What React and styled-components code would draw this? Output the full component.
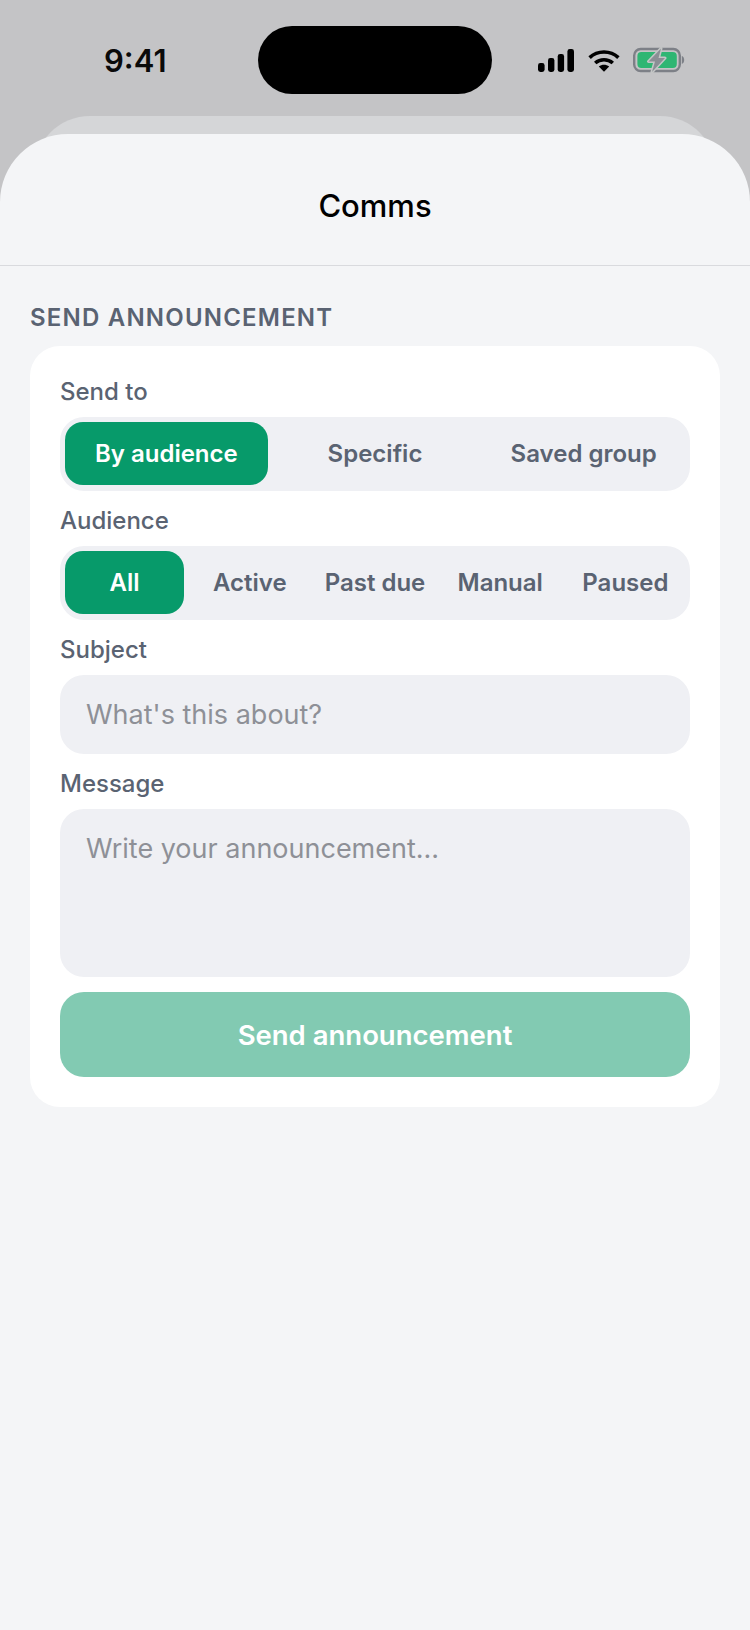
import React from 'react'
import styled, { createGlobalStyle } from 'styled-components'

const Global = createGlobalStyle`
    html, body {
        margin: 0;
        padding: 0;
        background: #c4c4c6;
    }
    * {
        box-sizing: border-box;
    }
`

const Phone = styled.div`
    display: flex;
    flex-direction: column;
    width: 750px;
    height: 1630px;
    overflow: hidden;
    background: #c4c4c6;
    font-family: "Inter", "Liberation Sans", sans-serif;
`

const StatusBar = styled.div`
    display: grid;
    grid-template-columns: 1fr 234px 1fr;
    align-items: center;
    height: 116px;
    padding-top: 4px;
    flex-shrink: 0;
`

const Time = styled.span`
    justify-self: start;
    margin-left: 104px;
    padding-top: 2px;
    font-size: 31px;
    font-weight: 600;
    line-height: 36px;
    color: #0a0a0a;
`

const Island = styled.div`
    height: 68px;
    border-radius: 34px;
    background: #000;
`

const StatusIcons = styled.div`
    display: flex;
    align-items: center;
    gap: 14px;
    margin-left: 46px;
`

const BatteryWrap = styled.span`
    display: flex;
    margin-left: -1px;
`

const BackSheet = styled.div`
    height: 70px;
    margin: 0 34px -52px;
    flex-shrink: 0;
    border-radius: 56px 56px 0 0;
    background: #d5d6d8;
`

const Sheet = styled.div`
    position: relative;
    flex: 1;
    border-radius: 68px 68px 0 0;
    background: #f4f5f7;
`

const Header = styled.header`
    display: flex;
    align-items: center;
    justify-content: center;
    height: 132px;
    padding-top: 12px;
    border-bottom: 1.5px solid #d9dade;
`

const Title = styled.h1`
    margin: 0;
    font-size: 31px;
    font-weight: 500;
    line-height: 36px;
    color: #000;
`

const Content = styled.main`
    padding: 38px 30px 0;
`

const SectionTitle = styled.h2`
    margin: 0 0 15px;
    font-size: 24px;
    font-weight: 600;
    line-height: 27px;
    letter-spacing: 1.2px;
    color: #5a6372;
`

const Card = styled.section`
    display: flex;
    flex-direction: column;
    padding: 30px;
    border-radius: 30px;
    background: #fff;
`

const Label = styled.label`
    display: block;
    margin-bottom: 11px;
    padding-top: 1px;
    font-size: 24px;
    font-weight: 550;
    line-height: 29px;
    color: #5a6372;
`

const Segments = styled.div`
    display: grid;
    grid-template-columns: repeat(${(p) => p.$count}, 1fr);
    gap: 6px;
    height: 74px;
    margin-bottom: 14px;
    padding: 5px 5px 6px;
    border-radius: 24px;
    background: #eff0f4;
`

const Segment = styled.button`
    padding: 0;
    border: 0;
    border-radius: 18px;
    background: ${(p) => (p.$active ? '#079a6a' : 'transparent')};
    font-family: inherit;
    font-size: 24px;
    font-weight: 570;
    color: ${(p) => (p.$active ? '#fff' : '#5a6372')};
`

const Field = styled.div`
    height: ${(p) => p.$height}px;
    margin-bottom: ${(p) => p.$gap}px;
    padding: ${(p) => p.$top}px 26px 0;
    border-radius: 24px;
    background: #eff0f4;
    font-size: 27px;
    line-height: 31px;
    color: #8e9097;
`

const SendButton = styled.button`
    height: 85px;
    padding: 0;
    border: 0;
    border-radius: 24px;
    background: #82cab2;
    font-family: inherit;
    font-size: 27.5px;
    font-weight: 590;
    color: #fff;
`

const Signal = () => (
    <svg width="36" height="23" viewBox="0 0 36 23" fill="#000">
        <rect x="0" y="14" width="6.6" height="9" rx="2.4" />
        <rect x="10" y="9" width="6.4" height="14" rx="2.4" />
        <rect x="19.7" y="5" width="6.4" height="18" rx="2.4" />
        <rect x="29.4" y="0" width="6.6" height="23" rx="2.4" />
    </svg>
)

const Wifi = () => (
    <svg width="32" height="23" viewBox="0 0 32 23" fill="none" stroke="#000" strokeWidth="3.6">
        <path d="M1.6 8.6C9.6 1.2 22.4 1.2 30.4 8.6" />
        <path d="M7.2 14C12.2 9.6 19.8 9.6 24.8 14" />
        <path d="M10.8 17.4L16 22.8L21.2 17.4C18 15.2 14 15.2 10.8 17.4Z" fill="#000" stroke="none" />
    </svg>
)

const Battery = () => (
    <svg width="52" height="26" viewBox="0 0 52 26" fill="none">
        <rect x="1.2" y="2" width="45.6" height="22" rx="6.5" stroke="#7d8087" strokeWidth="2.4" />
        <rect x="4.4" y="5" width="39.4" height="16" rx="4" fill="#2fb673" />
        <path d="M48.8 9C50.4 9.6 51.2 11.2 51.2 13C51.2 14.8 50.4 16.4 48.8 17Z" fill="#7d8087" />
        <path
            d="M28 1.5L15.5 14.5H22L19 25L32 11H25.5Z"
            fill="#8b8e95"
            stroke="#c4c6c6"
            strokeWidth="3"
            strokeLinejoin="round"
            paintOrder="stroke"
        />
    </svg>
)

const sendTo = ['By audience', 'Specific', 'Saved group']
const audience = ['All', 'Active', 'Past due', 'Manual', 'Paused']

const App = () => {
    return (
        <Phone>
            <Global />
            <StatusBar>
                <Time>9:41</Time>
                <Island />
                <StatusIcons>
                    <Signal />
                    <Wifi />
                    <BatteryWrap>
                        <Battery />
                    </BatteryWrap>
                </StatusIcons>
            </StatusBar>
            <BackSheet />
            <Sheet>
                <Header>
                    <Title>Comms</Title>
                </Header>
                <Content>
                    <SectionTitle>SEND ANNOUNCEMENT</SectionTitle>
                    <Card>
                        <Label>Send to</Label>
                        <Segments $count={sendTo.length}>
                            {sendTo.map((item, i) => (
                                <Segment key={item} $active={i === 0}>{item}</Segment>
                            ))}
                        </Segments>
                        <Label>Audience</Label>
                        <Segments $count={audience.length}>
                            {audience.map((item, i) => (
                                <Segment key={item} $active={i === 0}>{item}</Segment>
                            ))}
                        </Segments>
                        <Label>Subject</Label>
                        <Field $height={79} $gap={14} $top={24}>What's this about?</Field>
                        <Label>Message</Label>
                        <Field $height={168} $gap={15} $top={24}>Write your announcement...</Field>
                        <SendButton>Send announcement</SendButton>
                    </Card>
                </Content>
            </Sheet>
        </Phone>
    )
}

export default App
